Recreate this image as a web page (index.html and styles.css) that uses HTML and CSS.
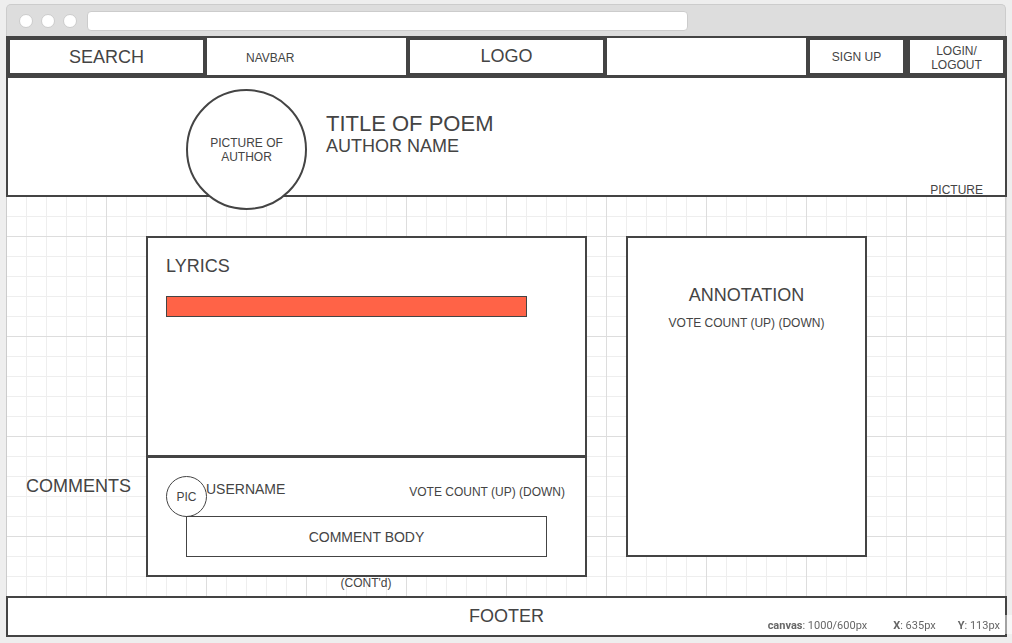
FILE: index.html
```html
<!DOCTYPE html>
<html lang="en">
<head>
<meta charset="utf-8">
<title>Poem page wireframe</title>
<link rel="stylesheet" href="styles.css">
</head>
<body>
<div class="browser">
  <div class="chrome">
    <div class="dots"><span class="dot"></span><span class="dot"></span><span class="dot"></span></div>
    <input class="url" type="text" aria-label="Address">
  </div>
  <div class="canvas">
    <nav class="navbar">
      <input class="nav-box nav-search" type="text" placeholder="SEARCH" aria-label="Search">
      <span class="nav-label">NAVBAR</span>
      <a class="nav-box nav-logo" href="#">LOGO</a>
      <button class="nav-box nav-button nav-signup" type="button">SIGN UP</button>
      <button class="nav-box nav-button nav-login" type="button">LOGIN/<br>LOGOUT</button>
    </nav>
    <header class="hero">
      <div class="portrait">PICTURE OF AUTHOR</div>
      <div class="heading">
        <h1 class="title">TITLE OF POEM</h1>
        <p class="author">AUTHOR NAME</p>
      </div>
      <span class="hero-note">PICTURE</span>
    </header>
    <main class="content">
      <section class="panel lyrics">
        <h2 class="label">LYRICS</h2>
        <div class="highlight"></div>
      </section>
      <h2 class="label comments-label">COMMENTS</h2>
      <section class="panel comment">
        <div class="comment-head">
          <div class="avatar">PIC</div>
          <span class="username">USERNAME</span>
          <span class="votes">VOTE COUNT (UP) (DOWN)</span>
        </div>
        <p class="comment-body">COMMENT BODY</p>
      </section>
      <p class="continued">(CONT'd)</p>
      <aside class="panel annotation">
        <h2 class="label">ANNOTATION</h2>
        <p class="annotation-votes">VOTE COUNT (UP) (DOWN)</p>
      </aside>
    </main>
    <footer class="footer">FOOTER</footer>
  </div>
</div>
<div class="status">
  <span class="status-size"><b>canvas</b>: 1000/600px</span>
  <span><b>X</b>: 635px</span>
  <span><b>Y</b>: 113px</span>
</div>
</body>
</html>
```
FILE: styles.css
```css
* { box-sizing: border-box; }

body {
  margin: 0;
  padding: 4px 6px 6px;
  background: #eee;
  color: #444;
  font: 12px/14px "Liberation Sans", Arial, sans-serif;
}

h1, h2, p { margin: 0; font-weight: normal; }

/* Browser chrome */
.chrome {
  display: flex;
  align-items: center;
  gap: 10px;
  padding: 6px 12px 5px;
  background: #ddd;
  border: 1px solid #ccc;
  border-bottom: 0;
  border-radius: 5px 5px 0 0;
}
.dots { display: flex; gap: 8px; }
.dot {
  width: 14px;
  height: 14px;
  background: #fff;
  border: 1px solid #ccc;
  border-radius: 50%;
}
.url {
  width: 601px;
  min-width: 0;
  height: 20px;
  padding: 0 6px;
  background: #fff;
  border: 1px solid #ccc;
  border-radius: 4px;
}

/* Canvas with a 20px grid and a stronger line every 100px */
.canvas {
  margin-right: -1px;
  background-color: #fff;
  background-image:
    linear-gradient(#ccc, #ccc),
    linear-gradient(#ccc, #ccc),
    linear-gradient(#ddd 1px, transparent 1px),
    linear-gradient(90deg, #ddd 1px, transparent 1px),
    linear-gradient(#eee 1px, transparent 1px),
    linear-gradient(90deg, #eee 1px, transparent 1px);
  background-position: left top, right 1px top, 0 0, 0 0, 0 0, 0 0;
  background-repeat: no-repeat, no-repeat, repeat, repeat, repeat, repeat;
  background-size: 1px 100%, 1px 100%, 100px 100px, 100px 100px, 20px 20px, 20px 20px;
}

/* Navbar */
.navbar {
  display: grid;
  grid-template-columns: 2fr 2fr 2fr 2fr 1fr 1fr;
  min-height: 41px;
  padding-right: 1px;
  background: #fff;
  box-shadow: inset 0 0 0 2px #444;
}
.nav-box {
  min-width: 0;
  margin: 0 -1px 0 0;
  padding: 0;
  background: #fff;
  border: 4px solid #444;
  border-radius: 0;
  color: #444;
  font: 18px/20px "Liberation Sans", Arial, sans-serif;
  text-align: center;
  text-decoration: none;
}
.nav-search::placeholder { color: #444; opacity: 1; }
.nav-label { align-self: center; padding: 2px 0 0 40px; }
.nav-logo { padding-top: 6px; }
.nav-button { font-size: 12px; line-height: 14px; }
.nav-signup { grid-column: 5; }
.nav-login { padding-top: 2px; }

/* Poem header */
.hero {
  display: flex;
  align-items: flex-start;
  gap: 19px;
  margin-top: -1px;
  padding: 11px 22px 0 178px;
  background: #fff;
  border: 2px solid #444;
}
.portrait {
  position: relative;
  z-index: 1;
  display: flex;
  flex: none;
  align-items: center;
  width: 121px;
  height: 121px;
  margin-bottom: -15px;
  padding: 0 18px;
  background: #fff;
  border: 2px solid #444;
  border-radius: 50%;
  text-align: center;
}
.heading { padding-top: 23px; }
.title { font-size: 22px; line-height: 24px; }
.author { font-size: 18px; line-height: 20px; }
.hero-note {
  align-self: flex-end;
  margin: 0 0 -2px auto;
}

/* Main content */
.content {
  display: grid;
  grid-template-columns: 140fr 440fr 40fr 240fr 140fr;
  padding: 39px 1px 6px 0;
}
.panel {
  margin-right: -1px;
  background: #fff;
  border: 2px solid #444;
}
.label { font-size: 18px; line-height: 20px; }
.lyrics {
  grid-area: 1 / 2;
  min-height: 221px;
  padding: 18px;
}
.highlight {
  height: 21px;
  margin: 20px 40px 0 0;
  background: #ff6347;
  border: 1px solid #444;
}
.comments-label {
  grid-area: 2 / 1;
  padding: 19px 0 0 20px;
}
.comment {
  grid-area: 2 / 2;
  margin-top: -1px;
  padding: 18px;
}
.comment-head { display: flex; align-items: flex-start; }
.avatar {
  display: flex;
  flex: none;
  align-items: center;
  justify-content: center;
  width: 41px;
  height: 41px;
  margin-right: -1px;
  border: 1px solid #444;
  border-radius: 50%;
}
.username {
  padding-top: 5px;
  font-size: 14px;
  line-height: 16px;
}
.votes { margin-left: auto; padding: 9px 2px 0 0; }
.comment-body {
  margin: -1px 20px 0;
  padding: 12px 8px 11px;
  border: 1px solid #444;
  font-size: 14px;
  line-height: 16px;
  text-align: center;
}
.continued {
  grid-area: 3 / 2;
  margin-top: -1px;
  text-align: center;
}
.annotation {
  grid-area: 1 / 4 / 3 / 5;
  margin-bottom: 20px;
  padding: 47px 18px 18px;
  text-align: center;
}
.annotation-votes { margin-top: 11px; }

/* Footer */
.footer {
  padding: 8px 16px 9px;
  background: #fff;
  border: 2px solid #444;
  font-size: 18px;
  line-height: 20px;
  text-align: center;
}

/* Pointer read-out floating over the page corner */
.status {
  position: fixed;
  right: 0;
  bottom: 9px;
  display: flex;
  gap: 22px;
  padding: 4px 12px 1px;
  background: rgba(255, 255, 255, 0.5);
  color: #666;
  font: 11px/14px Roboto, sans-serif;
}
.status-size { margin-right: 4px; }
```
